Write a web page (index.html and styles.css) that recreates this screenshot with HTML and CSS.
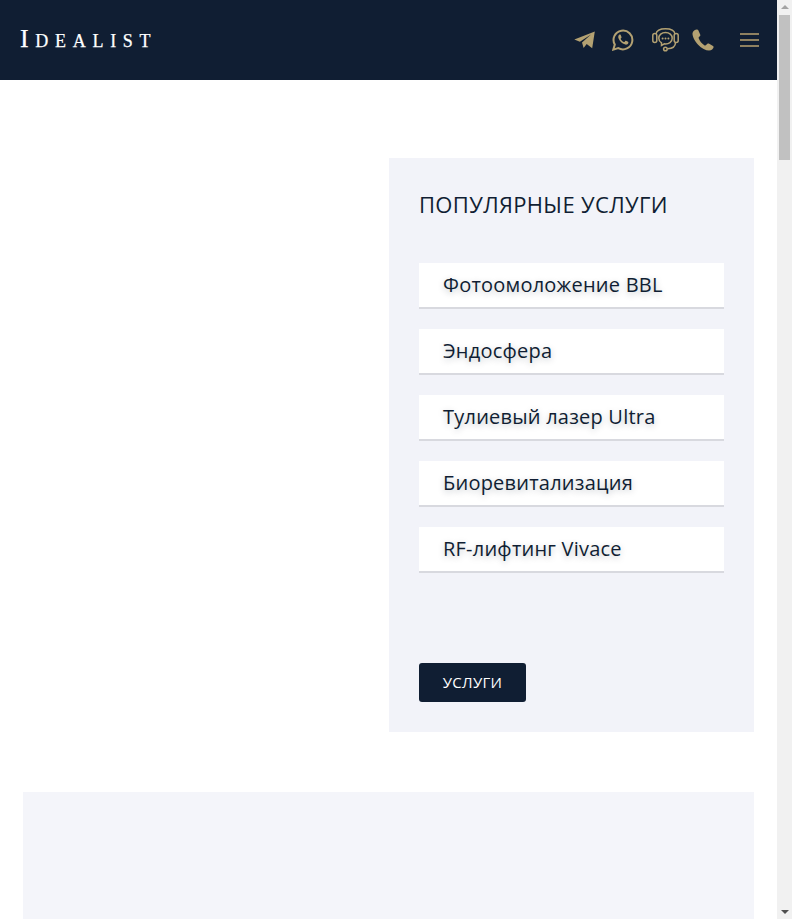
FILE: index.html
```html
<!DOCTYPE html>
<html lang="ru">
<head>
<meta charset="utf-8">
<title>Idealist</title>
<link rel="stylesheet" href="styles.css">
</head>
<body>
<div class="window">
  <div class="viewport">
    <header class="topbar">
      <a class="logo" href="#">Idealist</a>
      <nav class="contacts">
        <a class="icon icon-telegram" href="#" aria-label="Telegram">
          <svg viewBox="0 0 21 18" width="21" height="18"><path d="M0.3 8.6 20.8 0.5 18.2 17.2 12.7 13 9.6 17 8 11.6 17 3.6 5.9 10.7Z"/></svg>
        </a>
        <a class="icon icon-whatsapp" href="#" aria-label="WhatsApp">
          <svg viewBox="0 0 22 22" width="22" height="22"><path class="line" d="M1.3 20.6 2.8 15.6A9.4 9.4 0 1 1 6.3 19.1Z"/><path d="M7.6 5.6C7 5.9 6 7 6.3 8.6 6.8 11.2 10 14.9 13.4 15.6 14.9 15.8 16 15 16.3 14 16.5 13.4 16.4 13 16.1 12.8L14 11.8C13.6 11.7 13.4 11.8 13.2 12.1L12.5 12.9C12.3 13.1 12 13.1 11.7 13 10.4 12.4 9.3 11.3 8.7 10 8.6 9.8 8.6 9.6 8.8 9.4L9.4 8.7C9.6 8.4 9.6 8.2 9.5 7.9L8.7 5.9C8.5 5.5 8 5.4 7.6 5.6Z"/></svg>
        </a>
        <a class="icon icon-support" href="#" aria-label="Поддержка">
          <svg viewBox="0 0 27 24" width="27" height="24"><path class="line thin" d="M4 6C4.5 3 8 .8 13.5 .8S22.5 3 23 6"/><rect class="line thin" x=".8" y="5.5" width="4" height="9" rx="2"/><rect class="line thin" x="22.2" y="5.5" width="4" height="9" rx="2"/><path class="line thin" d="M13.5 4.5C9.6 4.5 6.8 7 6.8 10.2 6.8 12.2 7.8 13.8 9.5 14.9L9.5 17.4 12.4 15.8C16.8 16.4 20.2 13.8 20.2 10.2 20.2 7 17.4 4.5 13.5 4.5Z"/><circle cx="10.6" cy="10.4" r="1"/><circle cx="13.5" cy="10.4" r="1"/><circle cx="16.4" cy="10.4" r="1"/><path class="line thin" d="M23.5 14.5C23.5 18.5 20.5 20.5 15.5 20.7"/><circle class="line thin" cx="13.4" cy="21" r="1.8"/></svg>
        </a>
        <a class="icon icon-phone" href="#" aria-label="Телефон">
          <svg viewBox="0 0 22 22" width="22" height="22"><path d="M4.8 0.5C3.3 0.7 0.7 2 0.5 4.2 0.3 7 2.6 12 6.1 15.8 9.5 19.4 13.9 21.6 17 21.6 19.6 21.6 21.3 19.6 21.6 18.3 21.7 17.7 21.4 17.3 21 17L16.8 14.6C16.2 14.3 15.6 14.5 15.2 14.9L13.7 16.3C13.3 16.6 12.8 16.6 12.3 16.3 9.8 14.6 7.7 12 6.7 9.3 6.5 8.8 6.6 8.4 7 8L8 7.1C8.4 6.7 8.5 6.2 8.3 5.7L6.3 1.2C6 0.7 5.4 0.4 4.8 0.5Z"/></svg>
        </a>
        <button class="burger" type="button" aria-label="Меню"><span></span><span></span><span></span></button>
      </nav>
    </header>
    <main class="page">
      <section class="services-row">
        <aside class="services">
          <h2 class="services-title">ПОПУЛЯРНЫЕ УСЛУГИ</h2>
          <ul class="services-list">
            <li class="service"><a href="#">Фотоомоложение BBL</a></li>
            <li class="service"><a href="#">Эндосфера</a></li>
            <li class="service"><a href="#">Тулиевый лазер Ultra</a></li>
            <li class="service"><a href="#">Биоревитализация</a></li>
            <li class="service"><a href="#">RF-лифтинг Vivace</a></li>
          </ul>
          <a class="btn" href="#">УСЛУГИ</a>
        </aside>
      </section>
      <section class="next-block"></section>
    </main>
  </div>
  <div class="scrollbar" aria-hidden="true">
    <span class="arrow arrow-up"></span>
    <span class="thumb"></span>
    <span class="arrow arrow-down"></span>
  </div>
</div>
</body>
</html>
```
FILE: styles.css
```css
* { box-sizing: border-box; }
html, body { margin: 0; padding: 0; }
body { background: #fff; color: #101e33; font-family: "Open Sans", sans-serif; }
a { color: inherit; text-decoration: none; }

.window { display: flex; height: 919px; overflow: hidden; }
.viewport { flex: 1; min-width: 0; }

.scrollbar {
  width: 15px;
  background: #f1f1f1;
  display: flex;
  flex-direction: column;
  align-items: center;
}
.arrow { display: block; width: 0; height: 0; border-left: 4px solid transparent; border-right: 4px solid transparent; }
.arrow-up { margin-top: 5px; border-bottom: 4px solid #a3a3a3; }
.thumb { display: block; width: 11px; height: 145px; margin-top: 6px; background: #c1c1c1; }
.arrow-down { margin-top: auto; margin-bottom: 5px; border-top: 4px solid #505050; }

.topbar {
  height: 80px;
  background: #101e33;
  display: flex;
  align-items: center;
  justify-content: space-between;
  padding: 0 18px 0 20px;
}
.logo {
  font-family: "Liberation Serif", serif;
  font-variant: small-caps;
  font-size: 26px;
  letter-spacing: 6.7px;
  -webkit-text-stroke: .25px #fff;
  color: #fff;
  line-height: 1;
  padding-bottom: 2px;
}
.contacts { display: flex; align-items: center; }
.icon { display: block; line-height: 0; }
.icon svg { display: block; fill: #b3a172; }
.icon svg .line { fill: none; stroke: #b3a172; stroke-width: 2; }
.icon svg .line.thin { stroke-width: 1.5; }
.icon-telegram { margin-right: 17px; }
.icon-whatsapp { margin-right: 18px; }
.icon-support { margin-right: 13px; }
.icon-phone { margin-right: 26px; }
.burger {
  width: 19px;
  padding: 0;
  border: 0;
  background: none;
  display: flex;
  flex-direction: column;
  gap: 4px;
}
.burger span { display: block; height: 2px; background: #8f8160; }

.page { padding: 78px 23px 0; }
.services-row { display: flex; justify-content: flex-end; }
.services {
  width: 365px;
  height: 574px;
  background: #f2f3f9;
  padding: 30px;
}
.services-title {
  margin: 0 0 42px;
  font-size: 22px;
  font-weight: 400;
  letter-spacing: .35px;
  line-height: 33px;
}
.services-list { list-style: none; margin: 0 0 90px; padding: 0; display: flex; flex-direction: column; gap: 20px; }
.service {
  height: 46px;
  background: #fff;
  border-bottom: 2px solid #d8d9df;
  padding-left: 24px;
  font-size: 20px;
  font-weight: 500;
  letter-spacing: .22px;
  line-height: 43px;
  text-shadow: 0 2px 6px rgba(16, 30, 51, .25);
}
.btn {
  display: block;
  width: 107px;
  height: 39px;
  background: #101e33;
  border-radius: 3px;
  color: #fff;
  font-size: 15px;
  font-weight: 500;
  letter-spacing: .3px;
  line-height: 39px;
  text-align: center;
}
.next-block {
  margin-top: 60px;
  height: 4800px;
  background: #f4f5fa;
}
```
